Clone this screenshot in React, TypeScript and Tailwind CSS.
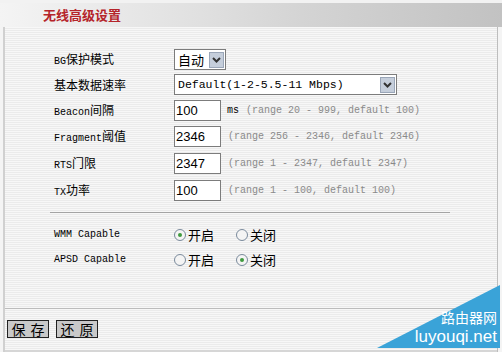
import React from "react";

const mono = "font-['Liberation_Mono','Noto_Sans_CJK_SC',monospace]";
const cjk = "font-['Noto_Sans_CJK_SC','Liberation_Sans',sans-serif]";
const sans = "font-['Liberation_Sans','Noto_Sans_CJK_SC',sans-serif]";

function Label({ en, zh }: { en?: string; zh?: string }) {
  return (
    <div className="w-[120px] flex items-baseline text-black">
      {en && <span className={`${mono} text-[10px]`}>{en}</span>}
      {zh && <span className={`${cjk} text-[12px]`}>{zh}</span>}
    </div>
  );
}

function Arrow() {
  return (
    <div className="w-[15px] h-[16px] bg-[#c5cedb] border border-[#9aa6b8] flex items-center justify-center">
      <svg width="9" height="6" viewBox="0 0 9 6">
        <path d="M1 1 L4.5 4.5 L8 1" stroke="#333" strokeWidth="2" fill="none" />
      </svg>
    </div>
  );
}

function TextInput({ value }: { value: string }) {
  return (
    <div className={`w-[47px] h-[21px] bg-white border border-[#7c7c7c] ${sans} text-[13px] leading-[19px] pl-[1px] text-black`}>
      {value}
    </div>
  );
}

function Hint({ children }: { children: React.ReactNode }) {
  return <span className={`${mono} text-[10px] text-[#8a8a8a] ml-[7px]`}>{children}</span>;
}

function Radio({ checked, label }: { checked: boolean; label: string }) {
  return (
    <div className="flex items-center w-[62px]">
      <div className="w-[12px] h-[12px] rounded-full border border-[#7a8a9c] bg-[#f4f4f4] flex items-center justify-center">
        {checked && <div className="w-[4px] h-[4px] rounded-full bg-[#3f9a3f]" />}
      </div>
      <span className={`${cjk} text-[13px] ml-[2px] text-black`}>{label}</span>
    </div>
  );
}

function Btn({ a, b }: { a: string; b: string }) {
  return (
    <div className={`w-[42px] h-[18px] bg-[#c9c9c9] border border-[#222] ${cjk} text-[14px] leading-[16px] text-black flex items-center justify-center gap-[5px]`}>
      <span>{a}</span>
      <span>{b}</span>
    </div>
  );
}

export default function App() {
  return (
    <div className="w-[502px] h-[352px] bg-[#f4f4f4] relative overflow-hidden">
      {/* header */}
      <div className="h-[27px] pt-[3px] bg-[#f2f2f2]">
        <div className="h-[24px] bg-[linear-gradient(to_right,#f4f4f4,#e0e0e0_40%,#d4d4d4_60%,#c2c2c2)] flex items-center pl-[43px]">
          <span className={`${cjk} text-[13px] font-bold text-[#b5242a]`}>无线高级设置</span>
        </div>
      </div>
      {/* body */}
      <div className="h-[325px] ml-[3px] mr-[4px] border-l-2 border-r border-l-[#d0d0d0] border-r-[#bdbdbd] bg-[repeating-linear-gradient(to_bottom,#f7f7f7_0px,#f7f7f7_1px,#ebebeb_1px,#ebebeb_2px)] flex flex-col">
        <div className="pl-[49px] pt-[20px]">
          <div className="h-[25px] flex items-center">
            <Label en="BG" zh="保护模式" />
            <div className="w-[52px] h-[21px] bg-white border border-[#7c7c7c] flex items-center justify-between pl-[3px] pr-[1px]">
              <span className={`${cjk} text-[13px] text-black`}>自动</span>
              <Arrow />
            </div>
          </div>
          <div className="h-[25px] flex items-center">
            <Label zh="基本数据速率" />
            <div className="w-[223px] h-[21px] bg-white border border-[#7c7c7c] flex items-center justify-between pl-[3px] pr-[1px]">
              <span className={`${mono} text-[11.5px] text-black`}>Default(1-2-5.5-11 Mbps)</span>
              <Arrow />
            </div>
          </div>
          <div className="h-[26px] flex items-center">
            <Label en="Beacon" zh="间隔" />
            <TextInput value="100" />
            <span className={`${mono} text-[10px] text-black ml-[6px]`}>ms</span>
            <Hint>(range 20 - 999, default 100)</Hint>
          </div>
          <div className="h-[27px] flex items-center">
            <Label en="Fragment" zh="阈值" />
            <TextInput value="2346" />
            <Hint>(range 256 - 2346, default 2346)</Hint>
          </div>
          <div className="h-[27px] flex items-center">
            <Label en="RTS" zh="门限" />
            <TextInput value="2347" />
            <Hint>(range 1 - 2347, default 2347)</Hint>
          </div>
          <div className="h-[27px] flex items-center">
            <Label en="TX" zh="功率" />
            <TextInput value="100" />
            <Hint>(range 1 - 100, default 100)</Hint>
          </div>
        </div>
        <div className="ml-[45px] w-[400px] mt-[8px] h-[1px] bg-[#a4a4a4]" />
        <div className="pl-[49px] pt-[9px]">
          <div className="h-[25px] flex items-center">
            <Label en="WMM Capable" />
            <Radio checked={true} label="开启" />
            <Radio checked={false} label="关闭" />
          </div>
          <div className="h-[25px] flex items-center">
            <Label en="APSD Capable" />
            <Radio checked={false} label="开启" />
            <Radio checked={true} label="关闭" />
          </div>
        </div>
        <div className="mt-[36px] h-[1px] bg-[#bcbcbc]" />
        <div className="flex gap-[7px] pl-[2px] pt-[11px]">
          <Btn a="保" b="存" />
          <Btn a="还" b="原" />
        </div>
        <div className="mt-auto h-[2px] bg-[#d6d6d6]" />
      </div>
      {/* watermark */}
      <div className="absolute left-[377px] top-[285px] w-[123px] h-[63px]">
        <svg width="123" height="63" className="absolute inset-0">
          <polygon points="0,63 123,0 123,63" fill="#3aa3d8" />
        </svg>
        <div className={`absolute right-[3px] top-[24px] ${cjk} text-[14px] leading-[16px] text-white`}>路由器网</div>
        <div className={`absolute right-[3px] top-[42px] ${sans} text-[17px] leading-[19px] text-white`}>luyouqi.net</div>
      </div>
    </div>
  );
}
